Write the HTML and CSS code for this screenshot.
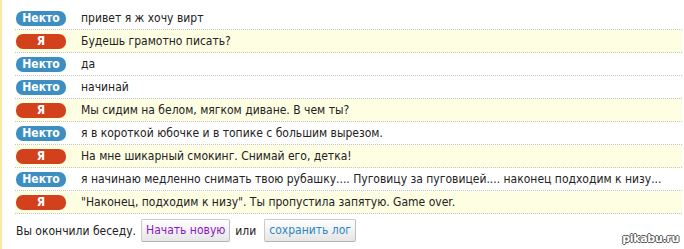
FILE: index.html
```html
<!DOCTYPE html>
<html lang="ru">
<head>
<meta charset="utf-8">
<link rel="stylesheet" href="styles.css">
</head>
<body>
<div class="page">
  <div class="log">
    <div class="row"><span class="badge them">Некто</span><span class="msg">привет я ж хочу вирт</span></div>
    <div class="row me"><span class="badge you">Я</span><span class="msg">Будешь грамотно писать?</span></div>
    <div class="row"><span class="badge them">Некто</span><span class="msg">да</span></div>
    <div class="row"><span class="badge them">Некто</span><span class="msg">начинай</span></div>
    <div class="row me"><span class="badge you">Я</span><span class="msg">Мы сидим на белом, мягком диване. В чем ты?</span></div>
    <div class="row"><span class="badge them">Некто</span><span class="msg">я в короткой юбочке и в топике с большим вырезом.</span></div>
    <div class="row me"><span class="badge you">Я</span><span class="msg">На мне шикарный смокинг. Снимай его, детка!</span></div>
    <div class="row"><span class="badge them">Некто</span><span class="msg">я начинаю медленно снимать твою рубашку.... Пуговицу за пуговицей.... наконец подходим к низу...</span></div>
    <div class="row me"><span class="badge you">Я</span><span class="msg">"Наконец, подходим к низу". Ты пропустила запятую. Game over.</span></div>
  </div>
  <div class="footer">
    <span>Вы окончили беседу.</span>
    <span class="btn new">Начать новую</span>
    <span>или</span>
    <span class="btn save">сохранить лог</span>
  </div>
  <div class="mark">pikabu.ru</div>
</div>
</body>
</html>
```
FILE: styles.css
```css
html, body {
  margin: 0;
  padding: 0;
  background: #fff;
}
.page {
  position: relative;
  width: 684px;
  height: 249px;
  box-sizing: border-box;
  border-left: 2px solid #fbe8a2;
  padding: 7px 2px 0 13px;
  font-family: "DejaVu Sans Condensed", "DejaVu Sans", sans-serif;
  font-size: 12px;
  color: #222;
}
.row {
  display: flex;
  align-items: center;
  height: 22px;
  border-bottom: 1px dotted #c4c4c4;
}
.row.me {
  background: #fefee2;
}
.badge {
  flex: none;
  width: 50px;
  height: 15px;
  margin-left: 1px;
  margin-right: 15px;
  border-radius: 7px;
  color: #fff;
  font-weight: bold;
  font-size: 12px;
  line-height: 15px;
  text-align: center;
}
.badge.them { background: #3d8fc3; }
.badge.you { background: #d3401c; }
.msg {
  white-space: nowrap;
}
.footer {
  display: flex;
  align-items: center;
  gap: 5px;
  padding: 5px 0 0 1px;
}
.btn {
  display: inline-block;
  height: 21px;
  line-height: 21px;
  padding: 0 4px;
  border: 1px solid #cacaca;
  border-bottom-color: #b4b4b4;
  border-right-color: #bdbdbd;
  border-radius: 2px;
  background: linear-gradient(#fefefe, #e6e6e6);
}
.btn.new { color: #8a18c8; }
.btn.save { color: #2a88bf; margin-left: 3px; }
.mark {
  position: absolute;
  right: 5px;
  bottom: 4px;
  font-family: "DejaVu Sans", sans-serif;
  font-weight: bold;
  font-size: 11px;
  color: #fff;
  text-shadow: -1px 0 #555, 1px 0 #555, 0 -1px #555, 0 1px #555;
  letter-spacing: -0.3px;
}
```
